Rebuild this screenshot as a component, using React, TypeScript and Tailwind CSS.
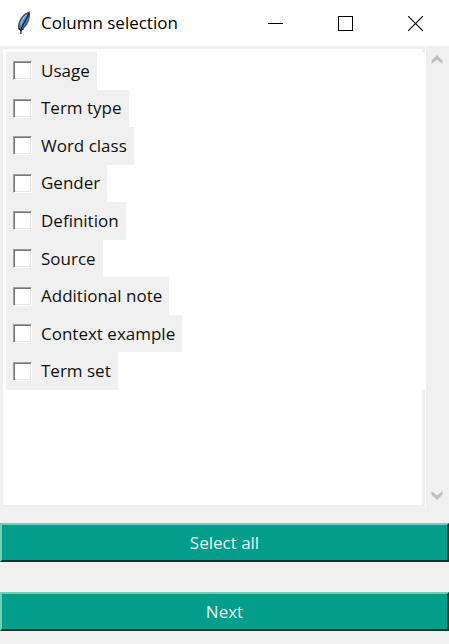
import { useState } from "react";

const COLUMNS = [
  "Usage",
  "Term type",
  "Word class",
  "Gender",
  "Definition",
  "Source",
  "Additional note",
  "Context example",
  "Term set",
];

function Feather() {
  return (
    <svg className="h-6 w-4" viewBox="0 0 16 24" aria-hidden="true">
      <path d="M14 .500C10.500 1 6.500 3.500 4 8.500 2 12.500 1.300 15.500 2.400 18l2.400 1.800C8.500 17.500 11.500 14 12.800 10 13.800 6.500 14.400 3.500 14 .500Z" fill="#4a4f57" />
      <path d="M12.300 2.200C8.500 4 5.500 7.500 4.200 11.500c-.8 2.400-.9 4-.5 5.500l1.300 1C8 16 10.600 12.500 11.700 9 12.500 6.500 12.700 4.200 12.300 2.200Z" fill="#4a8ad4" />
      <path d="M10.500 4C7.500 6.500 5.500 10 4.800 14" stroke="#8dbbee" strokeWidth="1.300" fill="none" />
      <path d="M12.900 2.500C10.500 8 7.500 13 5.400 17L4.800 23" stroke="#16191f" strokeWidth="1.200" fill="none" />
      <path d="M2.600 17.300l2.400 2.200 2.800-1.800" stroke="#222" strokeWidth="1.300" fill="none" />
    </svg>
  );
}

function TitleBar() {
  return (
    <header className="flex h-[46px] items-center bg-white pl-4">
      <Feather />
      <h1 className="ml-[9px] flex-1 text-[17px] leading-6 text-black">Column selection</h1>
      <div className="flex h-full items-center gap-[55px] pr-[26px]">
        <button type="button" aria-label="Minimize">
          <svg className="block h-[15px] w-[15px]" viewBox="0 0 15 15" shapeRendering="crispEdges">
            <path d="M0 7.500h15" stroke="#000" />
          </svg>
        </button>
        <button type="button" aria-label="Maximize">
          <svg className="block h-[15px] w-[15px]" viewBox="0 0 15 15" shapeRendering="crispEdges">
            <path d="M.5.5h14v14H.5z" stroke="#000" fill="none" />
          </svg>
        </button>
        <button type="button" aria-label="Close">
          <svg className="block h-[15px] w-[15px]" viewBox="0 0 15 15">
            <path d="M0 0l15 15M15 0L0 15" stroke="#000" strokeWidth="1.100" />
          </svg>
        </button>
      </div>
    </header>
  );
}

function ScrollBar() {
  return (
    <div className="flex w-6 flex-col justify-between border-l border-white bg-[#f0f0f0] pt-2 pr-px pb-[7px]">
      <button type="button" aria-label="Scroll up" className="flex justify-center">
        <svg className="block h-[11px] w-3" viewBox="0 0 12 11">
          <path d="M6 1L11.500 6.500v3.500L6 5.500.5 10V6.500Z" fill="#c0c0c0" />
        </svg>
      </button>
      <button type="button" aria-label="Scroll down" className="flex justify-center">
        <svg className="block h-[11px] w-3" viewBox="0 0 12 11">
          <path d="M6 10L.5 4.500V1L6 5.500 11.500 1v3.500Z" fill="#c0c0c0" />
        </svg>
      </button>
    </div>
  );
}

function ActionButton({ text, onClick }: { text: string; onClick?: () => void }) {
  return (
    <button
      type="button"
      onClick={onClick}
      className="block h-[39px] w-full border-2 border-t-[#6fd0b8] border-r-[#12352f] border-b-[#12302c] border-l-[#6fd0b8] bg-[#009e8b] text-[17px] leading-6 text-[#e9f7f3]"
    >
      {text}
    </button>
  );
}

export default function App() {
  const [checked, setChecked] = useState<string[]>([]);
  const toggle = (name: string) =>
    setChecked((now) => (now.includes(name) ? now.filter((n) => n !== name) : [...now, name]));

  return (
    <div className="min-h-screen bg-[#f0f0f0] font-['Open_Sans','Noto_Sans',sans-serif]">
      <TitleBar />
      <main>
        <div className="flex h-[462px]">
          <div className="flex-1 border-[3px] border-[#f0f0f0] bg-white pt-[3px]">
            <div className="-mr-[3px] grid h-[338px] auto-rows-fr justify-items-start bg-white pl-[3px]">
              {COLUMNS.map((name) => (
                <label key={name} className="flex items-center gap-[9px] bg-[#f0f0f0] pr-[7px] pl-[7px] text-[17px] leading-6 text-[#111]">
                  <input
                    type="checkbox"
                    checked={checked.includes(name)}
                    onChange={() => toggle(name)}
                    className="h-[19px] w-[19px] appearance-none border border-t-[#a0a0a0] border-r-white border-b-white border-l-[#a0a0a0] bg-white shadow-[inset_1px_1px_0_#757575,inset_-1px_-1px_0_#e6e6e6] checked:bg-[#009e8b]"
                  />
                  {name}
                </label>
              ))}
            </div>
          </div>
          <ScrollBar />
        </div>
        <div className="mt-[15px] flex flex-col gap-[30px]">
          <ActionButton text="Select all" onClick={() => setChecked(COLUMNS)} />
          <ActionButton text="Next" />
        </div>
      </main>
    </div>
  );
}
